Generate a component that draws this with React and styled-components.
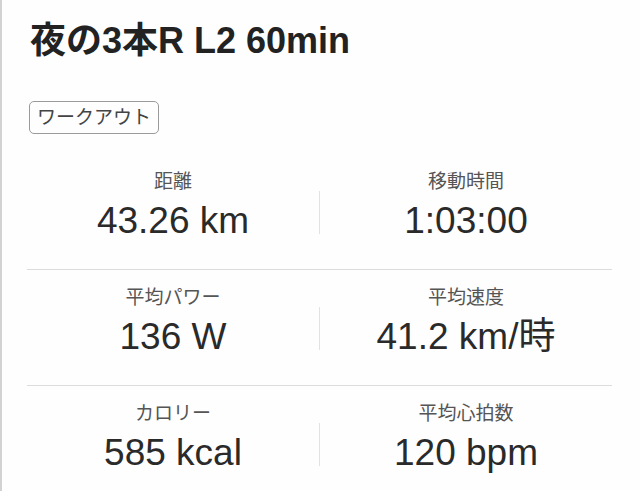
import React from 'react';
import styled, { createGlobalStyle } from 'styled-components';

const GlobalStyle = createGlobalStyle`
  html, body { margin: 0; padding: 0; background: #fefefe; }
  body { font-family: "Liberation Sans", "Noto Sans CJK JP", sans-serif; }
`;

const Page = styled.div`
  min-height: 491px;
  box-sizing: border-box;
  border-left: 2px solid #d2d2d2;
  padding: 21px 28px 0 25px;
`;

const Title = styled.h1`
  margin: 0 0 0 3px;
  font-size: 36px;
  line-height: 40px;
  font-weight: 700;
  color: #222;
`;

const Tag = styled.span`
  display: inline-block;
  margin: 40px 0 0 2px;
  padding: 5px 7px 4px;
  font-size: 19px;
  line-height: 22px;
  color: #444;
  border: 1px solid #9a9a9a;
  border-radius: 5px;
`;

const Stats = styled.div`
  margin-top: 20px;
`;

const Row = styled.div`
  display: grid;
  grid-template-columns: 1fr 1px 1fr;
  padding: 16px 0 ${p => (p.last ? 0 : 26)}px;
  border-bottom: ${p => (p.last ? 'none' : '1px solid #dcdcdc')};
`;

const Cell = styled.div`
  display: flex;
  flex-direction: column;
  align-items: center;
`;

const Label = styled.div`
  font-size: 19px;
  line-height: 24px;
  color: #555;
`;

const Value = styled.div`
  margin-top: 5px;
  font-size: 37px;
  line-height: 44px;
  color: #2a2a2a;
`;

const Divider = styled.div`
  margin-top: 21px;
  height: 43px;
  background: #e2e2e2;
`;

const rows = [
  [['距離', '43.26 km'], ['移動時間', '1:03:00']],
  [['平均パワー', '136 W'], ['平均速度', '41.2 km/時']],
  [['カロリー', '585 kcal'], ['平均心拍数', '120 bpm']],
];

function Stat({ label, value }) {
  return (
    <Cell>
      <Label>{label}</Label>
      <Value>{value}</Value>
    </Cell>
  );
}

export default function App() {
  return (
    <Page>
      <GlobalStyle />
      <Title>夜の3本R L2 60min</Title>
      <Tag>ワークアウト</Tag>
      <Stats>
        {rows.map((r, i) => (
          <Row key={i} last={i === rows.length - 1}>
            <Stat label={r[0][0]} value={r[0][1]} />
            <Divider />
            <Stat label={r[1][0]} value={r[1][1]} />
          </Row>
        ))}
      </Stats>
    </Page>
  );
}
